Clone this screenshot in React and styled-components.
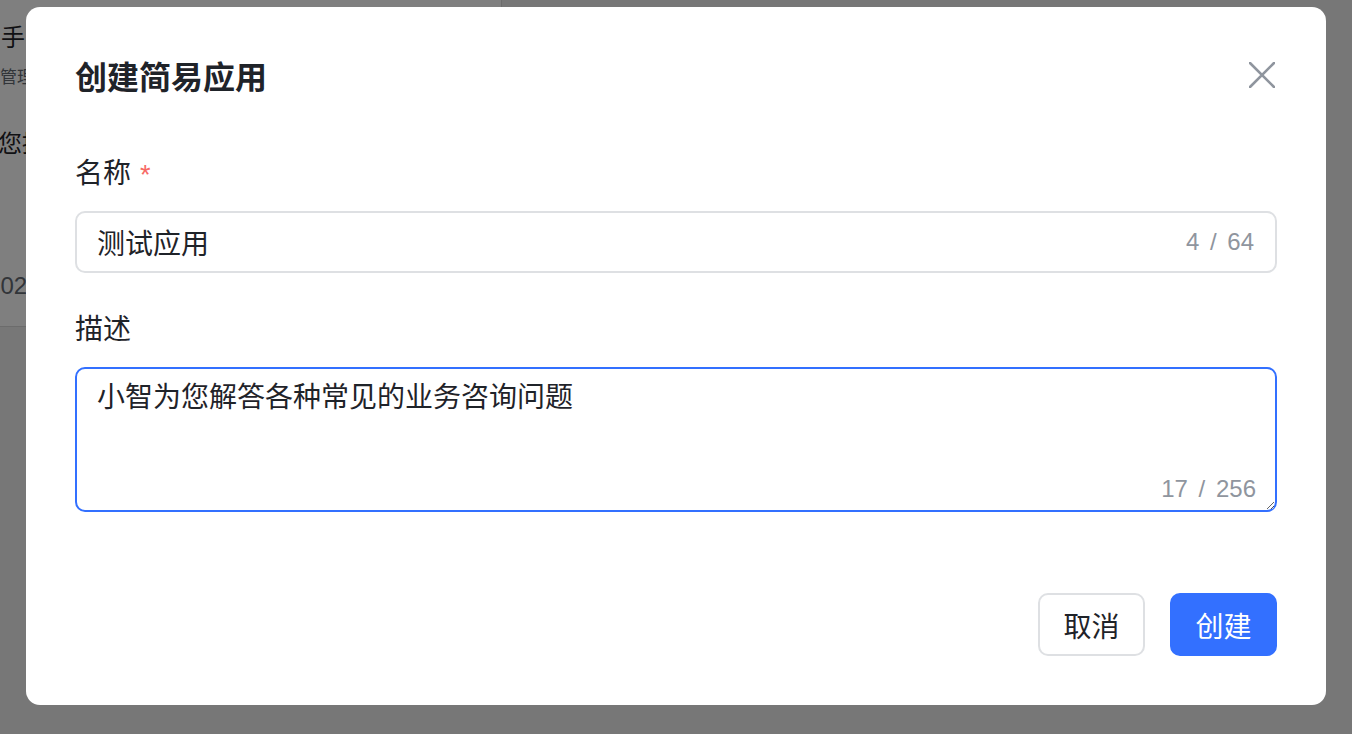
import styled, { createGlobalStyle } from "styled-components";

const GlobalStyle = createGlobalStyle`
  * {
    box-sizing: border-box;
  }
  html, body {
    margin: 0;
    padding: 0;
    font-family: "Liberation Sans", "Noto Sans CJK SC", sans-serif;
    color: #1f2329;
  }
`;

const StyledPage = styled.div`
  width: 100vw;
  height: 100vh;
  overflow: hidden;
  background-color: #eeeeee;
`;

const StyledBgCard = styled.section`
  display: flex;
  flex-direction: column;
  width: 523px;
  height: 340px;
  margin-top: -13px;
  margin-left: -21px;
  padding-left: 21px;
  background-color: #ffffff;
  border: 1px solid #d8d8d8;
  border-radius: 12px;
  overflow: hidden;
`;

const StyledBgLine = styled.p`
  margin: ${(props) => props.top}px 0 0 ${(props) => props.shift}px;
  font-size: ${(props) => props.size}px;
  line-height: 1;
  white-space: nowrap;
  color: ${(props) => props.color || "#1f2329"};
`;

const StyledOverlay = styled.div`
  position: fixed;
  inset: 0;
  display: flex;
  justify-content: center;
  align-items: flex-start;
  padding-top: 7px;
  background-color: rgba(0, 0, 0, 0.5);
`;

const StyledModal = styled.div`
  display: flex;
  flex-direction: column;
  width: 1300px;
  height: 698px;
  padding: 49px;
  background-color: #ffffff;
  border-radius: 14px;
`;

const StyledHeader = styled.header`
  display: flex;
  justify-content: space-between;
  align-items: center;
  height: 44px;
`;

const StyledTitle = styled.h2`
  margin: 0;
  font-size: 32px;
  font-weight: 700;
  line-height: 44px;
  color: #1f2329;
`;

const StyledCloseBtn = styled.button`
  display: flex;
  align-items: center;
  justify-content: center;
  width: 36px;
  height: 36px;
  margin: 0 -3px 6px 0;
  padding: 0;
  border: none;
  background: none;
  cursor: pointer;
`;

const StyledForm = styled.form`
  display: flex;
  flex-direction: column;
  gap: 39px;
  margin-top: 56px;
`;

const StyledField = styled.div`
  display: flex;
  flex-direction: column;
  gap: 19px;
`;

const StyledLabel = styled.label`
  display: flex;
  align-items: center;
  gap: 9px;
  height: 36px;
  font-size: 28px;
  line-height: 36px;
  color: #1f2329;
`;

const StyledRequired = styled.span`
  margin-top: 2px;
  font-size: 27px;
  color: #f76964;
`;

const StyledInputBox = styled.div`
  display: flex;
  align-items: center;
  height: 62px;
  padding: 0 21px 0 20px;
  border: 2px solid #dee0e3;
  border-radius: 10px;
`;

const StyledInput = styled.input`
  flex: 1;
  min-width: 0;
  padding: 0;
  border: none;
  outline: none;
  font-family: inherit;
  font-size: 28px;
  color: #1f2329;
  background: transparent;
`;

const StyledCount = styled.span`
  font-size: 24px;
  word-spacing: 4px;
  color: #8f959e;
  white-space: nowrap;
`;

const StyledAreaBox = styled.div`
  position: relative;
  display: flex;
`;

const StyledTextArea = styled.textarea`
  width: 100%;
  height: 145px;
  padding: 11px 20px;
  border: 2px solid #3370ff;
  border-radius: 10px;
  outline: none;
  resize: vertical;
  font-family: inherit;
  font-size: 28px;
  line-height: 36px;
  color: #1f2329;
`;

const StyledAreaCount = styled(StyledCount)`
  position: absolute;
  right: 21px;
  bottom: 9px;
`;

const StyledFooter = styled.footer`
  display: flex;
  justify-content: flex-end;
  gap: 25px;
  margin-top: auto;
`;

const StyledButton = styled.button`
  width: 107px;
  height: 63px;
  padding: 0;
  border: 2px solid ${(props) => (props.primary ? "#3370ff" : "#dee0e3")};
  border-radius: 10px;
  background-color: ${(props) => (props.primary ? "#3370ff" : "#ffffff")};
  color: ${(props) => (props.primary ? "#ffffff" : "#1f2329")};
  font-family: inherit;
  font-size: 28px;
  cursor: pointer;
`;

const CloseIcon = () => (
  <svg width="26" height="26" viewBox="0 0 26 26" fill="none">
    <path d="M1 1L25 25M25 1L1 25" stroke="#8f959e" strokeWidth="2.6" strokeLinecap="round" />
  </svg>
);

const App = () => {
  return (
    <StyledPage>
      <GlobalStyle />
      <StyledBgCard>
        <StyledBgLine size={24} top={38} shift={-72}>
          智能助手
        </StyledBgLine>
        <StyledBgLine size={17} top={19} shift={-35} color="#646a73">
          客服管理
        </StyledBgLine>
        <StyledBgLine size={24} top={46} shift={-27}>
          为您提供
        </StyledBgLine>
        <StyledBgLine size={24} top={118} shift={-62} color="#646a73">
          2025-02-18
        </StyledBgLine>
      </StyledBgCard>

      <StyledOverlay>
        <StyledModal>
          <StyledHeader>
            <StyledTitle>创建简易应用</StyledTitle>
            <StyledCloseBtn type="button" aria-label="关闭">
              <CloseIcon />
            </StyledCloseBtn>
          </StyledHeader>

          <StyledForm>
            <StyledField>
              <StyledLabel htmlFor="name">
                名称<StyledRequired>*</StyledRequired>
              </StyledLabel>
              <StyledInputBox>
                <StyledInput id="name" type="text" defaultValue="测试应用" />
                <StyledCount>4 / 64</StyledCount>
              </StyledInputBox>
            </StyledField>

            <StyledField>
              <StyledLabel htmlFor="desc">描述</StyledLabel>
              <StyledAreaBox>
                <StyledTextArea id="desc" defaultValue="小智为您解答各种常见的业务咨询问题" />
                <StyledAreaCount>17 / 256</StyledAreaCount>
              </StyledAreaBox>
            </StyledField>
          </StyledForm>

          <StyledFooter>
            <StyledButton type="button">取消</StyledButton>
            <StyledButton type="submit" primary>
              创建
            </StyledButton>
          </StyledFooter>
        </StyledModal>
      </StyledOverlay>
    </StyledPage>
  );
};

export default App;
